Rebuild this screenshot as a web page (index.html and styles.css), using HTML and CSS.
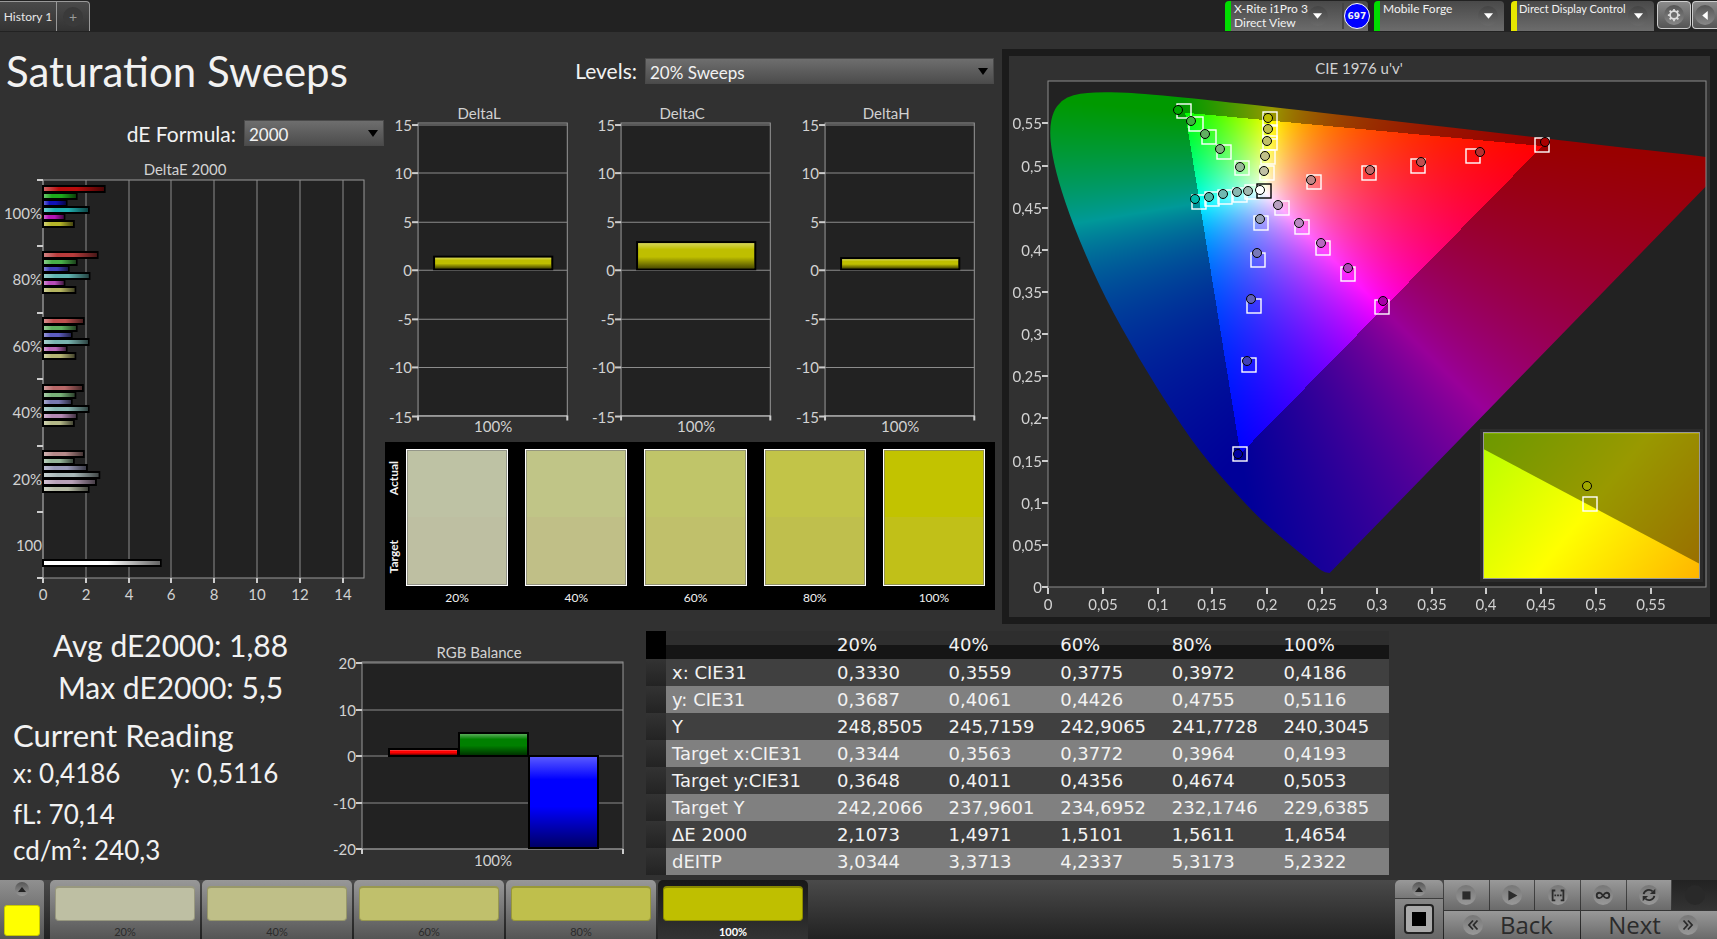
FILE: index.html
```html
<!DOCTYPE html>
<html lang="en">
<head>
    <meta charset="UTF-8">
    <meta name="viewport" content="width=device-width, initial-scale=1.0">
    <title>Saturation Sweeps</title>
    <link rel="stylesheet" href="styles.css">
</head>
<body>

    <header class="topbar">
        <nav class="tabs">
            <button class="tab">History 1</button>
            <button class="tab tab-add" aria-label="Add tab"><span class="round">+</span></button>
        </nav>
        <div class="devices">
            <div class="device device-meter">
                <span class="device-name">X-Rite i1Pro 3<br>Direct View</span>
                <button class="round drop" aria-label="Meter menu"><svg viewBox="0 0 12 8"><path d="M1 1h10L6 7z"/></svg></button>
                <span class="badge-cell"><span class="badge">697</span></span>
            </div>
            <div class="device device-source">
                <span class="device-name">Mobile Forge</span>
                <button class="round drop" aria-label="Source menu"><svg viewBox="0 0 12 8"><path d="M1 1h10L6 7z"/></svg></button>
            </div>
            <div class="device device-display">
                <span class="device-name">Direct Display Control</span>
                <button class="round drop" aria-label="Display menu"><svg viewBox="0 0 12 8"><path d="M1 1h10L6 7z"/></svg></button>
            </div>
            <button class="tool" aria-label="Settings"><span class="round"><svg class="gear" viewBox="0 0 16 16"><circle cx="8" cy="8" r="4.5"/><path d="M8 1v2.500M8 12.500V15M1 8h2.500M12.500 8H15M3 3l2 2M11 11l2 2M13 3l-2 2M5 11l-2 2"/></svg></span></button>
            <button class="tool tool-last" aria-label="Collapse"><span class="round"><svg class="arrow" viewBox="0 0 8 12"><path d="M7 1v10L1 6z"/></svg></span></button>
        </div>
    </header>

    <main class="main">
        <div class="upper">
            <section class="left">
                <div class="heading">
                    <h1>Saturation Sweeps</h1>
                    <div class="field">
                        <label for="levels">Levels:</label>
                        <span class="select select-levels"><select id="levels"><option>20% Sweeps</option></select></span>
                    </div>
                </div>
                <div class="charts">
                    <div class="delta-e">
                        <div class="field field-formula">
                            <label for="formula">dE Formula:</label>
                            <span class="select select-formula"><select id="formula"><option>2000</option></select></span>
                        </div>
                        <svg id="deltaE" class="chart" viewBox="0 0 385 460"></svg>
                    </div>
                    <div class="middle">
                        <div class="deltas">
                            <svg id="deltaL" class="chart" viewBox="0 0 203 334"></svg>
                            <svg id="deltaC" class="chart" viewBox="0 0 203 334"></svg>
                            <svg id="deltaH" class="chart" viewBox="0 0 203 334"></svg>
                        </div>
                        <div class="swatches">
                            <div class="swatch-names"><span>Actual</span><span>Target</span></div>
                            <figure><div class="swatch s20"></div><figcaption>20%</figcaption></figure>
                            <figure><div class="swatch s40"></div><figcaption>40%</figcaption></figure>
                            <figure><div class="swatch s60"></div><figcaption>60%</figcaption></figure>
                            <figure><div class="swatch s80"></div><figcaption>80%</figcaption></figure>
                            <figure><div class="swatch s100"></div><figcaption>100%</figcaption></figure>
                        </div>
                    </div>
                </div>
            </section>

            <section class="cie">
                <h2>CIE 1976 u'v'</h2>
                <div class="cie-plot">
                    <canvas id="field" width="658" height="506"></canvas>
                    <div class="inset"></div>
                    <svg id="ciePoints" viewBox="0 0 658 506"></svg>
                </div>
            </section>
        </div>

        <div class="lower">
            <section class="stats">
                <div class="summary">
                    <p>Avg dE2000: 1,88</p>
                    <p>Max dE2000: 5,5</p>
                </div>
                <h2>Current Reading</h2>
                <p class="xy"><span>x: 0,4186</span><span>y: 0,5116</span></p>
                <p class="lum">fL: 70,14</p>
                <p class="lum">cd/m²: 240,3</p>
            </section>
            <section class="balance">
                <svg id="rgb" class="chart" viewBox="0 0 320 248"></svg>
            </section>
            <table class="results">
                <thead>
                    <tr><th class="grip"></th><th class="name"></th><th>20%</th><th>40%</th><th>60%</th><th>80%</th><th>100%</th></tr>
                </thead>
                <tbody>
                    <tr><td class="grip"></td><th>x: CIE31</th><td>0,3330</td><td>0,3559</td><td>0,3775</td><td>0,3972</td><td>0,4186</td></tr>
                    <tr><td class="grip"></td><th>y: CIE31</th><td>0,3687</td><td>0,4061</td><td>0,4426</td><td>0,4755</td><td>0,5116</td></tr>
                    <tr><td class="grip"></td><th>Y</th><td>248,8505</td><td>245,7159</td><td>242,9065</td><td>241,7728</td><td>240,3045</td></tr>
                    <tr><td class="grip"></td><th>Target x:CIE31</th><td>0,3344</td><td>0,3563</td><td>0,3772</td><td>0,3964</td><td>0,4193</td></tr>
                    <tr><td class="grip"></td><th>Target y:CIE31</th><td>0,3648</td><td>0,4011</td><td>0,4356</td><td>0,4674</td><td>0,5053</td></tr>
                    <tr><td class="grip"></td><th>Target Y</th><td>242,2066</td><td>237,9601</td><td>234,6952</td><td>232,1746</td><td>229,6385</td></tr>
                    <tr><td class="grip"></td><th>ΔE 2000</th><td>2,1073</td><td>1,4971</td><td>1,5101</td><td>1,5611</td><td>1,4654</td></tr>
                    <tr><td class="grip"></td><th>dEITP</th><td>3,0344</td><td>3,3713</td><td>4,2337</td><td>5,3173</td><td>5,2322</td></tr>
                </tbody>
            </table>
        </div>
    </main>

    <footer class="bottombar">
        <button class="current" aria-label="Current color">
            <span class="round small"><svg viewBox="0 0 10 6"><path d="M0 6h10L5 0z"/></svg></span>
            <span class="current-color"></span>
        </button>
        <div class="steps">
            <button class="step"><span class="chip c20"></span>20%</button>
            <button class="step"><span class="chip c40"></span>40%</button>
            <button class="step"><span class="chip c60"></span>60%</button>
            <button class="step"><span class="chip c80"></span>80%</button>
            <button class="step active"><span class="chip c100"></span>100%</button>
        </div>
        <div class="pattern">
            <button class="pattern-up" aria-label="Show patterns"><span class="round small"><svg viewBox="0 0 10 6"><path d="M0 6h10L5 0z"/></svg></span></button>
            <button class="pattern-window" aria-label="Window pattern"><svg viewBox="0 0 32 32"><rect class="frame" x="2" y="2" width="28" height="28" rx="3"/><rect x="9" y="9" width="14" height="14"/></svg></button>
        </div>
        <div class="transport">
            <div class="keys">
                <button aria-label="Stop"><span class="round"><svg viewBox="0 0 20 20"><path d="M6 6h9v9H6z"/></svg></span></button>
                <button aria-label="Play"><span class="round"><svg viewBox="0 0 20 20"><path d="M6 5l10 5.500L6 16z"/></svg></span></button>
                <button aria-label="Read series"><span class="round"><svg viewBox="0 0 20 20"><path class="line" d="M7 5H4v11h3M13 5h3v11h-3"/><path d="M6 9.500h2v2H6zM9 9.500h2v2H9zM12 9.500h2v2h-2z"/></svg></span></button>
                <button aria-label="Continuous"><span class="round"><svg viewBox="0 0 20 20"><path class="line" d="M10 10.500C8.500 8.500 7.500 7.500 6 7.500a3 3 0 0 0 0 6c1.500 0 2.500-1 4-3s2.500-3 4-3a3 3 0 0 1 0 6c-1.500 0-2.500-1-4-3z"/></svg></span></button>
                <button aria-label="Refresh"><span class="round"><svg viewBox="0 0 20 20"><path class="line" d="M4 9a6 6 0 0 1 10-3M16 11a6 6 0 0 1-10 3"/><path d="M17 3v6h-6zM3 17v-6h6z"/></svg></span></button>
                <button class="off" aria-label="Record" disabled><span class="round"></span></button>
            </div>
            <div class="pages">
                <button><span class="round"><svg viewBox="0 0 20 20"><path class="thin" d="M10 5l-4.500 5 4.500 5M15 5l-4.500 5 4.500 5"/></svg></span><span class="page-name">Back</span></button>
                <button><span class="page-name">Next</span><span class="round"><svg viewBox="0 0 20 20"><path class="thin" d="M5 5l4.500 5L5 15M10 5l4.500 5-4.500 5"/></svg></span></button>
            </div>
        </div>
    </footer>

    <script src="charts.js"></script>
</body>
</html>
```

FILE: styles.css
```css
* { box-sizing: border-box; margin: 0; padding: 0; }
body {
    font-family: Lato, sans-serif; background: #313131; color: #f2f2f2;
    min-height: 100vh; display: flex; flex-direction: column; overflow-x: hidden;
}
button { font-family: inherit; border: none; color: inherit; cursor: pointer; }
svg { display: block; }
h1, h2, th { font-weight: normal; }

/* top bar */
.topbar {
    display: flex; justify-content: space-between; height: 32px;
    background: #222; padding-top: 1px;
}
.tabs { display: flex; height: 30px; }
.tab {
    width: 57px; font-size: 12px; color: #e6e6e6; white-space: nowrap;
    background: linear-gradient(#4a4a4a, #333);
    border-top: 1px solid #999; border-right: 1px solid #999;
}
.tab-add { width: 33px; border-radius: 0 4px 0 0; display: flex; align-items: center; justify-content: center; }
.tab-add .round { background: #3a3a3a; color: #999; font-size: 14px; }
.round {
    width: 20px; height: 20px; border-radius: 50%; flex: none;
    display: flex; align-items: center; justify-content: center;
    background: linear-gradient(#777, #999);
}
.devices { display: flex; height: 30px; }
.device {
    display: flex; align-items: center; margin-right: 6px;
    background: linear-gradient(#494949, #6c6c6c);
    border-left: 6px solid #0d0; border-radius: 4px 4px 0 0;
}
.device-meter { width: 143px; }
.device-source { width: 130px; margin-right: 7px; }
.device-display { width: 143px; border-left-color: #e6e600; margin-right: 3px; }
.device-name { flex: 1; align-self: flex-start; padding: 1px 0 0 3px; font-size: 12px; line-height: 14px; white-space: nowrap; }
.device-display .device-name { padding-left: 2px; font-size: 11px; }
.drop { background: linear-gradient(#444, #6a6a6a); margin-right: 6px; }
.device-meter .drop { margin-right: 14px; }
.drop svg { width: 11px; height: 8px; fill: #fff; }
.badge-cell { border-left: 2px solid #444; height: 26px; width: 35px; display: flex; align-items: center; justify-content: center; }
.badge {
    width: 26px; height: 26px; border-radius: 50%; border: 1px solid #fff; background: #00f; flex: none;
    font: bold 9px/24px "DejaVu Sans", sans-serif; text-align: center;
}
.tool {
    width: 34px; height: 28px; border: 1px solid #ccc; border-radius: 4px; margin-right: 1px;
    background: linear-gradient(#8a8a8a, #555);
    display: flex; align-items: center; justify-content: center;
}
.tool-last { width: 25px; margin-right: 0; border-right: none; border-radius: 4px 0 0 4px; }
.tool .round { background: linear-gradient(#555, #888); }
.gear { width: 14px; height: 14px; fill: none; stroke: #ddd; stroke-width: 2; }
.arrow { width: 8px; height: 11px; fill: #fff; }

/* main area */
.main { flex: 1; }
.upper { display: grid; grid-template-columns: 1002fr 715fr; }
.left { padding-right: 7px; }
.heading { display: flex; justify-content: space-between; align-items: center; height: 71px; padding: 6px 1px 0 6px; }
.heading h1 { font-size: 42px; line-height: 48px; white-space: nowrap; }
.field { display: flex; align-items: center; gap: 8px; font-size: 21px; white-space: nowrap; }
.select { position: relative; height: 26px; }
.select::after {
    content: ""; position: absolute; right: 6px; top: 10px; pointer-events: none;
    border: 5px solid transparent; border-top: 7px solid #000; border-bottom: none;
}
.select select {
    appearance: none; width: 100%; height: 26px; padding: 4px 4px 0; border: 1px solid #4a4a4a;
    border-radius: 0; background: linear-gradient(#6e6e6e, #4c4c4c);
    color: #f2f2f2; font: 17px/20px Lato, sans-serif;
}
.select-levels { width: 349px; }
.select-formula { width: 140px; }
.charts { display: grid; grid-template-columns: 385fr 610fr; }
.field-formula { justify-content: flex-end; padding: 17px 1px 4px 0; }
.chart { width: 100%; }
.deltas { display: grid; grid-template-columns: repeat(3, 1fr); padding-bottom: 4px; }
.middle { min-width: 0; }

.chart text, #ciePoints text { font-size: 15px; fill: #d2d2d2; }
.plot-bg { fill: #222; stroke: #999; }
.grid { stroke: #8c8c8c; fill: none; }
.tick { stroke: #ccc; stroke-width: 2; }
.end { text-anchor: end; }
.mid { text-anchor: middle; }
.bar { stroke: #000; stroke-width: 2; }
.shade { pointer-events: none; }

.swatches {
    display: grid; grid-template-columns: 4px repeat(5, 1fr); column-gap: 17px;
    background: #000; padding: 7px 10px 0 0; height: 168px;
}
.swatch-names {
    display: flex; flex-direction: column; justify-content: space-between; height: 137px; width: 17px;
    padding: 12px 0; font-size: 12px; font-weight: bold;
}
.swatch-names span { writing-mode: vertical-rl; transform: rotate(180deg); line-height: 17px; text-align: center; }
.swatch { height: 137px; border: 1px solid #fff; outline: 1px solid rgba(120, 120, 120, 0.6); outline-offset: -2px; }
figcaption { font-size: 12px; line-height: 16px; padding-top: 4px; text-align: center; }
.s20 { background: linear-gradient(#bec2a4 50%, #bebfa2 50%); }
.s40 { background: linear-gradient(#c0c587 50%, #c0bf87 50%); }
.s60 { background: linear-gradient(#c0c569 50%, #c0c06b 50%); }
.s80 { background: linear-gradient(#c2c448 50%, #bfbf4d 50%); }
.s100 { background: linear-gradient(#c2c300 50%, #c1c018 50%); }

/* CIE diagram */
.cie { margin-top: 17px; border: 7px solid #1b1b1b; padding: 0 4px 30px 39px; }
.cie h2 { font-size: 15px; line-height: 25px; color: #d2d2d2; text-align: center; padding-right: 36px; }
.cie-plot { position: relative; aspect-ratio: 658 / 506; }
.cie-plot canvas { display: block; width: 100%; height: 100%; }
.cie-plot svg { position: absolute; inset: 0; width: 100%; height: 100%; overflow: visible; }
.inset {
    position: absolute; right: 6px; bottom: 8px; width: 33%; height: 29%;
    border: 1px solid #999; outline: 3px solid #2c2c2c;
    background: linear-gradient(129deg, #b5ff00, #ff0, #ffb500);
}
/* out-of-gamut half */
.inset::before {
    content: ""; display: block; height: 100%; background: rgba(0, 0, 0, 0.4);
    clip-path: polygon(0 0, 100% 0, 100% 90%, 0 11%);
}

/* lower row */
.lower { display: grid; grid-template-columns: minmax(0, 325fr) minmax(0, 321fr) minmax(0, 743fr) minmax(0, 328fr); }
.stats { padding-left: 13px; font-size: 26px; line-height: 32px; white-space: nowrap; }
.summary { text-align: center; font-size: 30px; line-height: 42px; padding-left: 3px; }
.stats h2 { font-size: 31px; line-height: 40px; padding-top: 7px; }
.xy { display: flex; gap: 50px; padding-top: 2px; }
.lum { padding-top: 4px; }
.xy + .lum { padding-top: 9px; }
.balance { padding: 1px 1px 0 0; }
.results {
    border-collapse: collapse; table-layout: fixed; width: 100%; margin-top: 7px; align-self: start;
    font: 18px/24px "DejaVu Sans", sans-serif; white-space: nowrap;
}
.results th, .results td { text-align: left; padding: 1px 0 1px 6px; height: 27px; }
.results thead th { height: 28px; background: linear-gradient(#2e2e2e 50%, #151515 50%); }
.results .grip { width: 20px; padding: 0; background: linear-gradient(#333, #232323); }
.results thead .grip { background: #000; }
.results .name { width: 165px; }
.results tbody tr { background: #404040; }
.results tbody tr:nth-child(even) { background: #808080; }

/* bottom bar */
.bottombar { display: flex; height: 59px; background: linear-gradient(#4a4a4a, #222); }
.current {
    width: 44px; background: linear-gradient(#909090, #555); margin-right: 6px;
    display: flex; flex-direction: column; align-items: center; border-radius: 0 4px 0 0; padding-top: 2px;
}
.small { width: 14px; height: 14px; background: linear-gradient(#555, #999); }
.small svg { width: 8px; height: 5px; fill: #222; }
.current-color { width: 36px; height: 31px; margin-top: 9px; background: #ff0; border: 1px solid #c9c900; border-radius: 3px; }
.steps { display: flex; gap: 2px; flex: 1; }
.step {
    width: 150px; padding: 6px 5px 0; font-size: 11px; line-height: 16px; color: #2b2b2b;
    background: linear-gradient(#989898, #555); border-radius: 5px 5px 0 0;
    display: flex; flex-direction: column; align-items: center;
}
.chip { width: 100%; height: 35px; border-radius: 4px; border: 1px solid #777; border-top: 2px solid #777; margin-bottom: 3px; flex: none; }
.c20 { background: #bebfa3; border-color: #98987f; }
.c40 { background: #bfbf88; border-color: #98986a; }
.c60 { background: #c0c06c; border-color: #989850; }
.c80 { background: #bfbf4c; border-color: #989838; }
.c100 { background: #bfbf00; border-color: #8a8a00; }
.step.active { background: linear-gradient(#181818, #333); color: #fff; font-weight: bold; }
.pattern { display: flex; flex-direction: column; gap: 1px; width: 48px; margin-right: 1px; }
.pattern button { background: linear-gradient(#999, #777); display: flex; align-items: center; justify-content: center; }
.pattern-up { height: 18px; border-radius: 5px 5px 0 0; }
.pattern .pattern-window { flex: 1; background: linear-gradient(#888, #666); }
.pattern-window svg { width: 32px; height: 32px; }
.frame { fill: #aaa; stroke: #222; stroke-width: 2; }
.transport { width: 273px; display: grid; grid-template-rows: 30px 28px; gap: 1px; }
.keys { display: grid; grid-template-columns: repeat(6, 1fr); gap: 1px; }
.pages { display: grid; grid-template-columns: 1fr 1fr; gap: 1px; }
.transport button { background: linear-gradient(#999, #6a6a6a); display: flex; align-items: center; justify-content: center; }
.transport .off { background: linear-gradient(#222, #333); }
.off .round { background: #292929; }
.transport .round svg { width: 18px; height: 18px; fill: #2b2b2b; }
.transport .line, .transport .thin { fill: none; stroke: #2b2b2b; stroke-width: 2; }
.page-name { font: 24px/28px "Open Sans", sans-serif; color: #2b2b2b; }
.pages button { gap: 17px; }
.pages button:first-child { padding-right: 8px; }
.pages button:last-child { padding-left: 8px; }
```

FILE: charts.js
```js
const NS = "http://www.w3.org/2000/svg";

function add(parent, tag, attrs, text) {
    const node = document.createElementNS(NS, tag);
    for (const key in attrs) node.setAttribute(key, attrs[key]);
    if (text !== undefined) node.textContent = text;
    parent.appendChild(node);
    return node;
}

// light-to-dark overlay used on every bar
function gradient(svg, id, horizontal) {
    const g = add(add(svg, "defs", {}), "linearGradient", { id: id, x1: 0, y1: 0, x2: horizontal ? 1 : 0, y2: horizontal ? 0 : 1 });
    add(g, "stop", { offset: 0, "stop-color": "#fff", "stop-opacity": 0.35 });
    add(g, "stop", { offset: 0.25, "stop-color": "#fff", "stop-opacity": 0 });
    add(g, "stop", { offset: 0.55, "stop-color": "#000", "stop-opacity": 0 });
    add(g, "stop", { offset: 1, "stop-color": "#000", "stop-opacity": 0.6 });
}

function bar(svg, x, y, w, h, color, grad) {
    add(svg, "rect", { x: x, y: y, width: w, height: h, fill: color, class: "bar" });
    add(svg, "rect", { x: x + 1, y: y + 1, width: w - 2, height: h - 2, fill: "url(#" + grad + ")", class: "shade" });
}

// DeltaE: one group of six bars per saturation level
function drawDeltaE() {
    const svg = document.getElementById("deltaE");
    const left = 43, top = 30, bottom = 428, unit = 21.4;
    gradient(svg, "gE", true);
    add(svg, "text", { x: 185, y: 25, class: "mid" }, "DeltaE 2000");
    add(svg, "rect", { x: left, y: top, width: 321, height: bottom - top, class: "plot-bg" });
    for (let v = 0; v <= 14; v += 2) {
        const x = Math.round(left + v * unit);
        add(svg, "line", { x1: x, x2: x, y1: top, y2: bottom, class: "grid" });
        add(svg, "line", { x1: x, x2: x, y1: bottom, y2: bottom + 5, class: "tick" });
        add(svg, "text", { x: x, y: 450, class: "mid" }, v);
    }
    ["100%", "80%", "60%", "40%", "20%", "100"].forEach((name, i) => {
        add(svg, "text", { x: 42, y: 69 + Math.round(i * 66.4), class: "end" }, name);
    });
    for (let i = 0; i <= 6; i++) {
        const y = Math.round(top + i * 66.4);
        add(svg, "line", { x1: 37, x2: left, y1: y, y2: y, class: "tick" });
    }
    const groups = [
        [36, [2.88, 1.57, 1.1, 2.14, 1, 1.44], ["#b80c0c", "#1ca81c", "#1010b8", "#20b0b0", "#b414b4", "#b4b428"]],
        [102, [2.55, 1.57, 1.2, 2.17, 1, 1.51], ["#b83c3c", "#48b048", "#4040b8", "#60b4b0", "#b84cb8", "#b4b460"]],
        [168, [1.9, 1.57, 1.34, 2.13, 1.1, 1.51], ["#c05050", "#60b060", "#5c5cc0", "#78b4b0", "#b868b8", "#b4b474"]],
        [235, [1.86, 1.51, 1.34, 2.13, 1.57, 1.44], ["#b86868", "#78b078", "#7878b0", "#88b8b4", "#b488b4", "#b4b888"]],
        [301, [1.9, 1.44, 2.05, 2.63, 2.47, 2.13], ["#b48888", "#94b498", "#9898b8", "#a8b8b8", "#b8a0b8", "#b4b8a4"]]
    ];
    groups.forEach(([y, values, colors]) => {
        values.forEach((v, i) => bar(svg, left, y + i * 7, v * unit, 6, colors[i], "gE"));
    });
    bar(svg, left, 410, 5.5 * unit, 6, "#fff", "gE");
}

function drawDelta(id, value) {
    const svg = document.getElementById(id);
    const left = 33, top = 20, width = 149, zero = 167, unit = 9.7;
    gradient(svg, "g" + id, false);
    add(svg, "text", { x: 94, y: 16, class: "mid" }, id.replace("d", "D"));
    add(svg, "rect", { x: left, y: top, width: width, height: 292, class: "plot-bg" });
    for (let v = 15; v >= -15; v -= 5) {
        const y = Math.round(zero - v * unit);
        add(svg, "line", { x1: left, x2: left + width, y1: y, y2: y, class: "grid" });
        add(svg, "line", { x1: left - 6, x2: left, y1: y, y2: y, class: "tick" });
        add(svg, "text", { x: left - 6, y: y + 6, class: "end" }, v);
    }
    add(svg, "line", { x1: left, x2: left, y1: 312, y2: 317, class: "tick" });
    add(svg, "line", { x1: left + width, x2: left + width, y1: 312, y2: 317, class: "tick" });
    add(svg, "text", { x: 108, y: 328, class: "mid" }, "100%");
    bar(svg, 49, zero - value * unit, 118, value * unit - 1, "#bfbf00", "g" + id);
}

function drawBalance() {
    const svg = document.getElementById("rgb");
    const left = 37, right = 298, zero = 131;
    gradient(svg, "gR", false);
    add(svg, "text", { x: 154, y: 33, class: "mid" }, "RGB Balance");
    add(svg, "rect", { x: left, y: 37, width: right - left, height: 187, class: "plot-bg" });
    for (let v = 20; v >= -20; v -= 10) {
        const y = Math.round(zero - v * 4.65);
        add(svg, "line", { x1: left, x2: right, y1: y, y2: y, class: "grid" });
        add(svg, "line", { x1: left - 6, x2: left, y1: y, y2: y, class: "tick" });
        add(svg, "text", { x: left - 6, y: y + 6, class: "end" }, v);
    }
    add(svg, "line", { x1: left, x2: left, y1: 224, y2: 229, class: "tick" });
    add(svg, "line", { x1: right, x2: right, y1: 224, y2: 229, class: "tick" });
    add(svg, "text", { x: 168, y: 241, class: "mid" }, "100%");
    bar(svg, 64, zero - 7, 69, 7, "#f00", "gR");
    bar(svg, 134, zero - 23, 69, 23, "#008000", "gR");
    bar(svg, 204, zero, 69, 92, "#00f", "gR");
}

// spectral locus, CIE 1931 x,y
const locus = [
    [.1741, .0050], [.1714, .0051], [.1689, .0069], [.1644, .0109], [.1566, .0177], [.1440, .0297],
    [.1241, .0578], [.1096, .0868], [.0913, .1327], [.0687, .2007], [.0454, .2950], [.0235, .4127],
    [.0082, .5384], [.0039, .6548], [.0139, .7502], [.0389, .8120], [.0743, .8338], [.1142, .8262],
    [.1547, .8059], [.1929, .7816], [.2296, .7543], [.3016, .6923], [.3731, .6245], [.4441, .5547],
    [.5125, .4866], [.5752, .4242], [.6270, .3725], [.6658, .3340], [.6915, .3083], [.7190, .2809], [.7347, .2653]
].map(([x, y]) => {
    const d = -2 * x + 12 * y + 3;
    return [4 * x / d, 9 * y / d];
});

function colorAt(u, v) {
    const X = 9 * u / (4 * v), Y = 1, Z = (12 - 3 * u - 20 * v) / (4 * v);
    const rgb = [
        3.2406 * X - 1.5372 * Y - 0.4986 * Z,
        -0.9689 * X + 1.8758 * Y + 0.0415 * Z,
        0.0557 * X - 0.2040 * Y + 1.0570 * Z
    ];
    const outside = Math.min(...rgb) < 0;
    const max = Math.max(...rgb);
    return rgb.map(c => 255 * Math.max(c, 0) / max * (outside ? 0.6 : 1));
}

function paintField() {
    const canvas = document.getElementById("field");
    const ctx = canvas.getContext("2d");
    const w = canvas.width, h = canvas.height;
    const img = ctx.createImageData(w, h);
    for (let y = 0; y < h; y++) {
        for (let x = 0; x < w; x++) {
            const c = colorAt((x + 0.5) / w * 0.6, 0.6 - (y + 0.5) / h * 0.6);
            img.data.set([c[0], c[1], c[2], 255], (y * w + x) * 4);
        }
    }
    ctx.putImageData(img, 0, 0);

    // keep only what lies inside the locus
    const pts = locus.map(([u, v]) => [u / 0.6 * w, h - v / 0.6 * h]);
    ctx.globalCompositeOperation = "destination-in";
    ctx.beginPath();
    ctx.moveTo(...pts[0]);
    for (let i = 1; i < pts.length - 1; i++) {
        const a = pts[i], b = pts[i + 1];
        ctx.quadraticCurveTo(a[0], a[1], (a[0] + b[0]) / 2, (a[1] + b[1]) / 2);
    }
    ctx.lineTo(...pts[pts.length - 1]);
    ctx.closePath();
    ctx.fill();
    ctx.globalCompositeOperation = "destination-over";
    ctx.fillStyle = "#222";
    ctx.fillRect(0, 0, w, h);
}

// target squares and measured circles in plot units
const targets = [
    [136, 30], [148, 43], [161, 56], [176, 71], [194, 87],
    [222, 38], [222, 51], [222, 62], [220, 76], [219, 92],
    [266, 101], [321, 92], [370, 85], [425, 75], [494, 64],
    [151, 121], [164, 118], [177, 116], [192, 114], [204, 111],
    [213, 142], [210, 179], [206, 225], [201, 284], [192, 373],
    [234, 127], [254, 146], [275, 167], [300, 193], [334, 226]
];
const measured = [
    [130, 29, "#00a800"], [143, 40, "#40b040"], [157, 53, "#60b060"], [172, 68, "#80b080"], [192, 86, "#98b898"],
    [220, 37, "#c0c000"], [220, 48, "#c0c048"], [219, 60, "#c0c068"], [217, 75, "#c0c088"], [216, 90, "#c0c0a4"],
    [263, 99, "#c08888"], [322, 89, "#c06868"], [373, 81, "#c05050"], [432, 71, "#b83030"], [497, 61, "#a80000"],
    [147, 118, "#00b8a8"], [161, 116, "#50b8a8"], [175, 113, "#70b8b0"], [189, 111, "#88b8b0"], [200, 110, "#a0b8b0"],
    [212, 138, "#98a0b8"], [209, 172, "#7878b8"], [203, 218, "#6060b8"], [199, 280, "#4040b8"], [190, 373, "#0000a0"],
    [230, 124, "#b8a0c0"], [251, 142, "#b888c0"], [273, 162, "#b868c0"], [300, 187, "#b048b8"], [335, 220, "#a800a8"]
];

function drawCie() {
    paintField();

    const svg = document.getElementById("ciePoints");
    add(svg, "rect", { x: 0, y: 0, width: 658, height: 506, class: "grid" });
    for (let i = 0; i < 12; i++) {
        const name = String(i * 5 / 100).replace(".", ",");
        const x = Math.round(i * 54.8), y = Math.round(506 - i * 42.15);
        add(svg, "line", { x1: x, x2: x, y1: 507, y2: 513, class: "tick" });
        add(svg, "line", { x1: -6, x2: 0, y1: y, y2: y, class: "tick" });
        add(svg, "text", { x: x, y: 529, class: "mid" }, name);
        add(svg, "text", { x: -6, y: y + 6, class: "end" }, name);
    }
    const square = (x, y, color) => add(svg, "rect", { x: x - 7, y: y - 7, width: 14, height: 14, fill: "none", stroke: color, "stroke-width": 1.4 });
    const dot = (x, y, color) => add(svg, "circle", { cx: x, cy: y, r: 4.5, fill: color, stroke: "#000" });
    targets.forEach(([x, y]) => square(x, y, "#fff"));
    square(216, 110, "#000");
    measured.forEach(([x, y, color]) => dot(x, y, color));
    dot(212, 109, "#fff");
    square(542, 423, "#fff");
    dot(539, 405, "#a0a800");
}

drawDeltaE();
drawDelta("deltaL", 1.4);
drawDelta("deltaC", 2.9);
drawDelta("deltaH", 1.25);
drawBalance();
drawCie();
```
